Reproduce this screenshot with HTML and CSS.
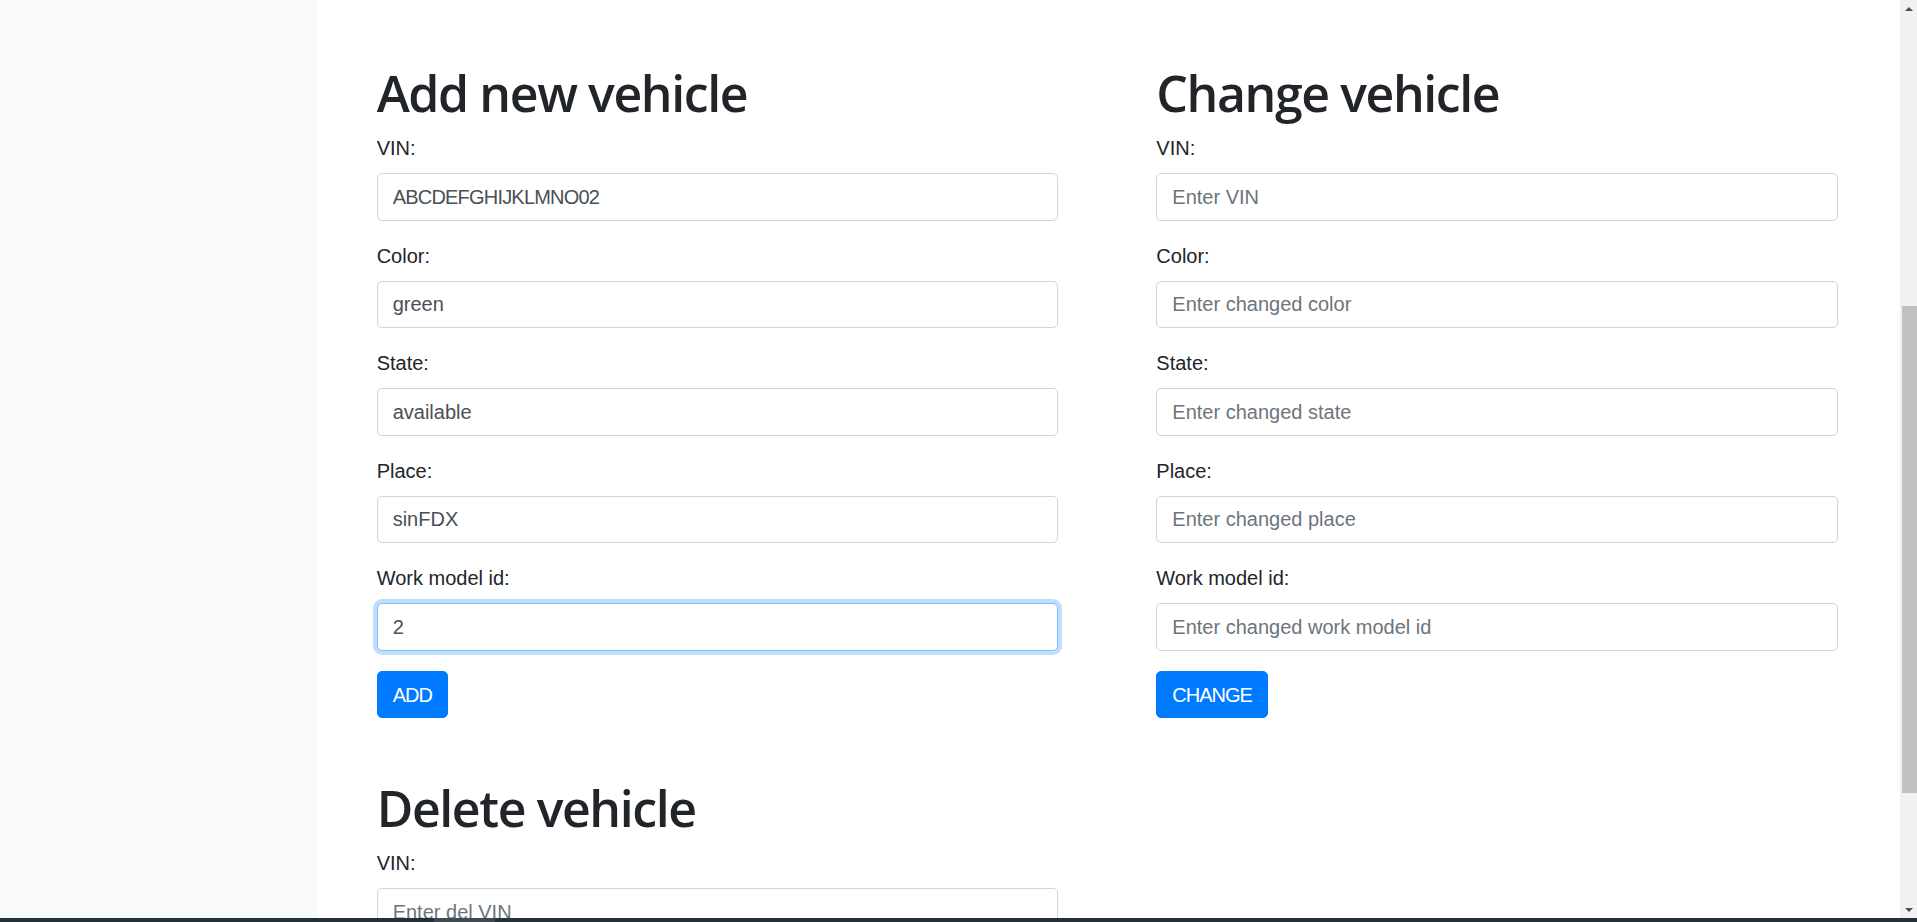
FILE: index.html
```html
<!DOCTYPE html>
<html lang="en">
<head>
<meta charset="utf-8">
<title>Vehicles</title>
<link rel="stylesheet" href="styles.css">
</head>
<body>
<div class="screen">
  <div class="app">
    <aside class="sidebar"></aside>
    <main class="main">
      <div class="row">
        <section class="panel">
          <h1 class="title">Add new vehicle</h1>
          <form class="form">
            <div class="group">
              <label class="label">VIN:</label>
              <input class="input upper" type="text" value="ABCDEFGHIJKLMNO02">
            </div>
            <div class="group">
              <label class="label">Color:</label>
              <input class="input" type="text" value="green">
            </div>
            <div class="group">
              <label class="label">State:</label>
              <input class="input" type="text" value="available">
            </div>
            <div class="group">
              <label class="label">Place:</label>
              <input class="input" type="text" value="sinFDX">
            </div>
            <div class="group">
              <label class="label">Work model id:</label>
              <input class="input focused" type="text" value="2">
            </div>
            <button class="btn" type="button">ADD</button>
          </form>
        </section>
        <section class="panel">
          <h1 class="title">Change vehicle</h1>
          <form class="form">
            <div class="group">
              <label class="label">VIN:</label>
              <input class="input" type="text" placeholder="Enter VIN">
            </div>
            <div class="group">
              <label class="label">Color:</label>
              <input class="input" type="text" placeholder="Enter changed color">
            </div>
            <div class="group">
              <label class="label">State:</label>
              <input class="input" type="text" placeholder="Enter changed state">
            </div>
            <div class="group">
              <label class="label">Place:</label>
              <input class="input" type="text" placeholder="Enter changed place">
            </div>
            <div class="group">
              <label class="label">Work model id:</label>
              <input class="input" type="text" placeholder="Enter changed work model id">
            </div>
            <button class="btn" type="button">CHANGE</button>
          </form>
        </section>
      </div>
      <div class="row">
        <section class="panel">
          <h1 class="title">Delete vehicle</h1>
          <form class="form">
            <div class="group">
              <label class="label">VIN:</label>
              <input class="input" type="text" placeholder="Enter del VIN">
            </div>
            <button class="btn" type="button">DELETE</button>
          </form>
        </section>
      </div>
    </main>
    <div class="scrollbar">
      <span class="arrow arrow-up"></span>
      <div class="track"><div class="thumb"></div></div>
      <span class="arrow arrow-down"></span>
    </div>
  </div>
  <div class="taskbar"><span class="taskbar-item"></span></div>
</div>
</body>
</html>
```
FILE: styles.css
```css
* { box-sizing: border-box; }
html, body { margin: 0; padding: 0; height: 100%; overflow: hidden; }
body {
  font-family: "Liberation Sans", Arial, sans-serif;
  font-size: 20px;
  line-height: 1.5;
  color: #212529;
  background: #fff;
}
.screen { display: flex; flex-direction: column; height: 922px; }
.app { display: flex; height: 918px; overflow: hidden; }
.sidebar { width: 316.67px; flex: none; background: #f8f9fa; }
.main {
  flex: 1;
  padding: 63.3px 62px 0 60px;
  background: #fff;
  overflow: hidden;
}
.row {
  display: grid;
  grid-template-columns: 1fr 1fr;
  column-gap: 98px;
  margin-bottom: 60px;
}
.title {
  margin: 0 0 10px;
  font-family: "Open Sans", "Liberation Sans", sans-serif;
  font-size: 50px;
  line-height: 60px;
  font-weight: 600;
  letter-spacing: -1.4px;
}
.form { margin: 0; }
.group { margin-bottom: 20px; }
.label { display: inline-block; margin-bottom: 10px; }
.input {
  display: block;
  width: 100%;
  height: 47.5px;
  padding: 7.5px 15px;
  font-family: inherit;
  font-size: 20px;
  line-height: 1.5;
  color: #495057;
  background: #fff;
  border: 1px solid #ced4da;
  border-radius: 5px;
  outline: none;
}
.input.upper { letter-spacing: -0.8px; }
.input::placeholder { color: #6c757d; opacity: 1; }
.input.focused {
  border-color: #80bdff;
  box-shadow: 0 0 0 4px rgba(0, 123, 255, 0.25);
}
.btn {
  display: inline-block;
  height: 47.5px;
  padding: 7.5px 15px;
  font-family: inherit;
  font-size: 20px;
  line-height: 1.5;
  letter-spacing: -1px;
  color: #fff;
  background: #007bff;
  border: 1px solid #007bff;
  border-radius: 5px;
}
.scrollbar {
  width: 17px;
  flex: none;
  background: #f1f1f1;
  display: flex;
  flex-direction: column;
  align-items: stretch;
}
.arrow {
  height: 17px;
  flex: none;
  display: flex;
  justify-content: center;
  align-items: center;
}
.arrow::before {
  content: "";
  width: 0;
  height: 0;
  border-left: 4px solid transparent;
  border-right: 4px solid transparent;
}
.arrow-up::before { border-bottom: 4px solid #505050; }
.arrow-down::before { border-top: 4px solid #505050; }
.track { flex: 1; padding-top: 289px; padding-left: 2px; }
.thumb { height: 487px; background: #c1c1c1; }
.taskbar { height: 4px; background: #22323b; display: flex; }
.taskbar-item { margin-left: 434px; width: 61px; background: #3c4a52; }
```
